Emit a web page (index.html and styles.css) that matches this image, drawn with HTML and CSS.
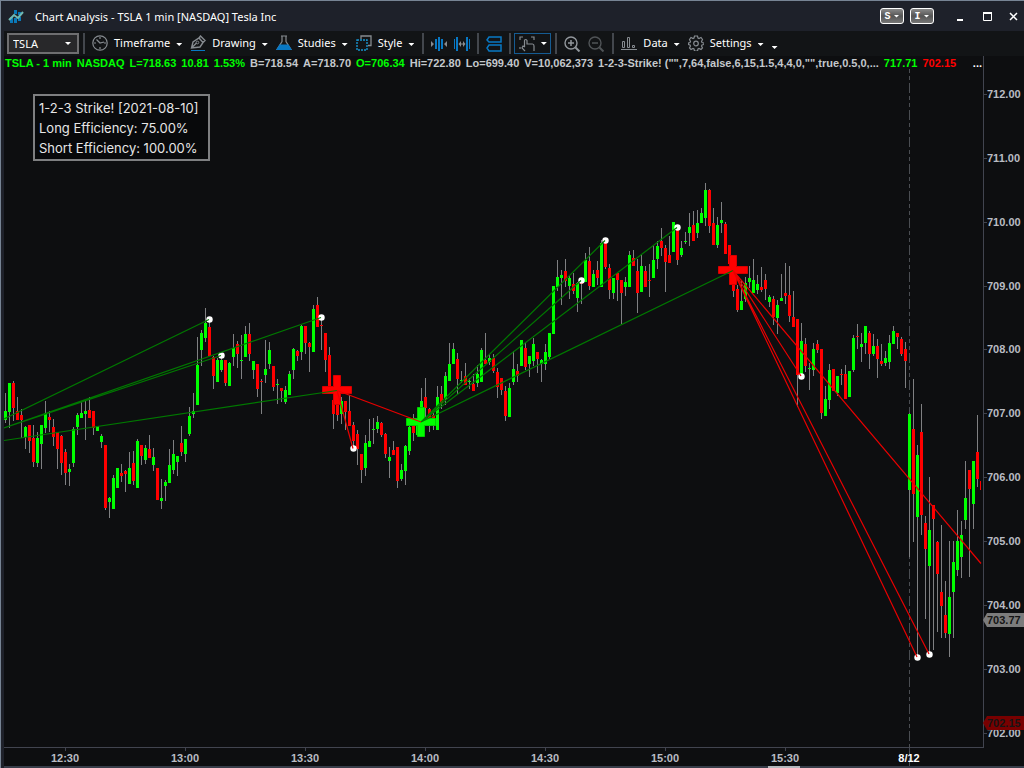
FILE: index.html
```html
<!DOCTYPE html>
<html lang="en">
<head>
<meta charset="utf-8">
<title>Chart Analysis - TSLA 1 min [NASDAQ] Tesla Inc</title>
<link rel="stylesheet" href="styles.css">
</head>
<body>
<div class="window">
  <header class="titlebar">
    <svg class="logo" width="16" height="16" viewBox="0 0 16 16"><path d="M2 9h3v6H2zM6 2h3v4H6zM6 10h3v5H6zM10 4h3v3h-3zM10 9h3v4h-3z" fill="#0a78b8"/><path d="M1 12l5-5 4 3 5-6" fill="none" stroke="#6fb9b4" stroke-width="2"/></svg>
    <h1 class="title">Chart Analysis - TSLA 1 min [NASDAQ] Tesla Inc</h1>
    <div class="links">
      <button class="link-btn" aria-label="Symbol link">S<i class="caret"></i></button>
      <button class="link-btn" aria-label="Interval link">I<i class="caret"></i></button>
    </div>
    <div class="controls">
      <button class="ctl" aria-label="Minimize"><svg width="12" height="12" viewBox="0 0 12 12"><path d="M3 9h6v2H3z" fill="#fff"/></svg></button>
      <button class="ctl" aria-label="Maximize"><svg width="12" height="12" viewBox="0 0 12 12"><path d="M2.500 2.500h8v8h-8z" fill="none" stroke="#fff"/><path d="M2 2h9v2H2z" fill="#fff"/></svg></button>
      <button class="ctl" aria-label="Close"><svg width="12" height="12" viewBox="0 0 12 12"><path d="M2 3l7 7M9 3l-7 7" stroke="#fff" stroke-width="1.5"/></svg></button>
    </div>
  </header>

  <nav class="toolbar" aria-label="Chart tools">
    <span class="symbol"><select class="symbol-select" aria-label="Symbol"><option>TSLA</option></select><i class="caret"></i></span>
    <span class="sep"></span>
    <button class="tool"><svg width="16" height="16" viewBox="0 0 16 16" fill="none" stroke="#868b90"><circle cx="8" cy="8" r="7.2" stroke-width="1.2"/><path d="M8 2v2M8 12v2M2 8h2M12 8h2M4.5 4.5L8 8l4-1" stroke-width="1.2"/></svg><span>Timeframe</span><i class="caret"></i></button>
    <button class="tool"><svg width="16" height="16" viewBox="0 0 16 16" fill="none" stroke="#868b90"><path d="M1.500 13L3 7l6-4 4 4.500L10 12zM9 3l1.500-2L15 5.500 13 7.500M1.500 13l5-5" stroke-width="1.4"/><circle cx="7.500" cy="7.500" r="1.300"/><path d="M1 15.500h14" stroke="#0878c4"/></svg><span>Drawing</span><i class="caret"></i></button>
    <button class="tool"><svg width="16" height="16" viewBox="0 0 16 16"><path d="M5 1h6M6 1v5.500L1 14.500h14L10 6.500V1" fill="none" stroke="#868b90" stroke-width="1.200"/><path d="M3.500 9.500h9L16 15H0z" fill="#0878c4"/></svg><span>Studies</span><i class="caret"></i></button>
    <button class="tool"><svg width="16" height="16" viewBox="0 0 16 16" fill="none"><path d="M5 4V1h10v9.500h-3" stroke="#868b90" stroke-width="1.300"/><path d="M1 5h10v10H1z" stroke="#1794cf" stroke-width="1.400" stroke-dasharray="2 1"/></svg><span>Style</span><i class="caret"></i></button>
    <span class="sep"></span>
    <button class="icon-btn" aria-label="Compress bars"><svg width="16" height="16" viewBox="0 0 16 16"><path d="M4 3h2v10H4zM7 1h2v14H7zM10 3h2v10h-2z" fill="#0878c4"/><path d="M0 5l3 3-3 3zM16 5l-3 3 3 3z" fill="#868b90"/></svg></button>
    <button class="icon-btn" aria-label="Expand bars"><svg width="16" height="16" viewBox="0 0 16 16"><path d="M0 3h1v10H0zM2 1h2v14H2zM12 1h2v14h-2zM15 3h1v10h-1z" fill="#0878c4"/><path d="M7 5L4.500 8 7 11zM9 5l2.500 3L9 11zM7 7.500h2v1H7z" fill="#868b90"/></svg></button>
    <span class="sep"></span>
    <button class="icon-btn" aria-label="Stack panes"><svg width="16" height="16" viewBox="0 0 16 16" fill="none" stroke="#0878c4" stroke-width="1.500"><path d="M15 1H3L1 4l2 2h12zM15 9H3l-2 3 2 3h12z"/></svg></button>
    <span class="sep"></span>
    <button class="touch" aria-label="Pointer mode"><svg width="16" height="16" viewBox="0 0 16 16" fill="none" stroke="#868b90"><path d="M1 4V1h3M12 1h3v3M1 11v2M5.500 11V4.500q0-1 1-1t1.500 1V8h5.500q1.500 0 1.500 2v5M6 15l-3-3 1-2 2 1" stroke-width="1.200"/></svg><i class="caret"></i></button>
    <span class="sep"></span>
    <button class="icon-btn" aria-label="Zoom in"><svg width="17" height="16" viewBox="0 0 17 16" fill="none" stroke="#92979c"><circle cx="7" cy="7" r="6" stroke-width="1.400"/><path d="M11.500 11.500l4 4" stroke-width="2"/><path d="M4 7h6M7 4v6" stroke-width="1.500"/></svg></button>
    <button class="icon-btn" aria-label="Zoom out"><svg width="17" height="16" viewBox="0 0 17 16" fill="none" stroke="#505457"><circle cx="7" cy="7" r="6" stroke-width="1.400"/><path d="M11.500 11.500l4 4" stroke-width="2"/><path d="M4 7h6" stroke-width="1.500"/></svg></button>
    <span class="sep"></span>
    <button class="tool"><svg width="16" height="16" viewBox="0 0 16 16" fill="none" stroke="#868b90"><path d="M1.500 6.500h2v6h-2zM6.500 2.500h2v10h-2zM11.500 10.500h2v2h-2zM0 14.500h16"/></svg><span>Data</span><i class="caret"></i></button>
    <button class="tool"><svg width="16" height="16" viewBox="0 0 16 16" fill="none" stroke="#868b90" stroke-width="1.200"><path d="M6.500 1h3l.5 2 1 .5 2-1 1.500 2-1 2 .5 1 2 .500v1.500l-2 .5-.5 1 1 2-1.500 1.500-2-1-1 .5-.5 2h-3l-.5-2-1-.5-2 1L1.500 13l1-2-.5-1-1.500-.5V8l1.500-.5.5-1-1-2 1.500-2 2 1 1-.5z"/><circle cx="8" cy="8.500" r="2.300"/></svg><span>Settings</span><i class="caret"></i></button>
    <button class="more" aria-label="More tools"><i class="caret"></i></button>
  </nav>

  <main class="chart">
    <svg id="plot" class="plot" viewBox="4 56 1020 710" preserveAspectRatio="none" role="img" aria-label="TSLA one minute candlestick chart"></svg>
    <div class="legend">
      <span class="up">TSLA - 1 min</span><span class="up">NASDAQ</span><span class="up">L=718.63</span><span class="up">10.81</span><span class="up">1.53%</span><span>B=718.54</span><span>A=718.70</span><span class="up">O=706.34</span><span>Hi=722.80</span><span>Lo=699.40</span><span>V=10,062,373</span><span>1-2-3-Strike! ("",7,64,false,6,15,1.5,4,4,0,"",true,0.5,0,...</span><span class="up">717.71</span><span class="down">702.15</span><button class="legend-more" aria-label="More values">...</button>
    </div>
    <section class="stats">
      <p>1-2-3 Strike! [2021-08-10]</p>
      <p>Long Efficiency: 75.00%</p>
      <p>Short Efficiency: 100.00%</p>
    </section>
  </main>
  <div class="scroll-strip"><span class="scroll-thumb"></span></div>
</div>
<script src="chart.js"></script>
</body>
</html>
```
FILE: styles.css
```css
* { box-sizing: border-box; }
body { margin: 0; background: #0d0e10; color: #fff; font-family: "Noto Sans", sans-serif; font-size: 11px; }
button, select { font: inherit; color: inherit; background: none; border: 0; margin: 0; padding: 0; }
svg { display: block; flex: none; }
.window { display: flex; flex-direction: column; height: 100vh; border-top: 1px solid #778494; border-left: 1px solid #778494; background: #1e212a; overflow: hidden; }
.titlebar { display: flex; align-items: center; height: 30px; flex: none; padding: 0 4px 0 7px; }
.title { margin: 0 0 0 11px; padding-top: 2px; font-size: 11px; font-weight: 400; line-height: 16px; flex: 1; white-space: nowrap; }
.links { display: flex; gap: 6px; margin-right: 20px; }
.link-btn { display: flex; align-items: center; justify-content: center; gap: 3px; width: 24px; height: 16px; border: 1px solid #fff; border-radius: 3px; background: linear-gradient(#888, #555 50%, #777); font: bold 10px "Liberation Mono", monospace; }
.controls { display: flex; gap: 15px; }
.ctl { width: 12px; height: 12px; }
.caret { display: block; flex: none; width: 6px; height: 3px; background: #fff; clip-path: polygon(0 0, 100% 0, 50% 100%); }
.toolbar { display: flex; align-items: center; height: 25px; flex: none; margin-left: 3px; padding-left: 3px; background: #121416; white-space: nowrap; }
.symbol { position: relative; width: 72px; height: 21px; margin-right: 4px; flex: none; }
.symbol-select { appearance: none; width: 100%; height: 100%; border: 2px solid #6e6e70; background: #28282a; padding: 0 4px; }
.symbol .caret { position: absolute; right: 8px; top: 9px; pointer-events: none; }
.sep { width: 2px; height: 21px; margin-right: 7px; background: #43474d; flex: none; }
.tool { display: flex; align-items: center; gap: 6px; margin-right: 8px; padding-bottom: 2px; flex: none; }
.tool .caret { margin-top: 4px; }
.icon-btn { margin-right: 7px; flex: none; }
.touch { display: flex; align-items: center; justify-content: center; gap: 6px; width: 37px; height: 21px; margin: 0 4px 0 -4px; border: 1px solid #155b92; flex: none; }
.more { margin-top: 8px; flex: none; }
.chart { position: relative; flex: 1; min-height: 0; margin-left: 3px; background: #0d0e10; overflow: hidden; }
.plot { width: 100%; height: 100%; }
.legend { position: absolute; left: 0; top: 0; width: 100%; padding: 0 42px 0 1px; display: flex; gap: 5px; font: bold 11px/14px "Liberation Sans", Arial, sans-serif; color: #c4c8cc; white-space: nowrap; }
.up { color: #0f0; }
.down { color: #f00; }
.legend-more { margin-left: auto; font-weight: bold; color: #fff; }
.stats { position: absolute; left: 29px; top: 38px; padding: 2px 10px 1px 4px; border: 2px solid #7e7f81; background: #08090b; font: 13px/20px Inter, sans-serif; color: #e6e6e6; white-space: nowrap; }
.stats p { margin: 0; }
.axis { fill: none; stroke: #41444f; stroke-width: 1; shape-rendering: crispEdges; }
.session { stroke: #4a4d52; stroke-dasharray: 10 3 4 3 4 3; stroke-dashoffset: 13; }
.label { font: bold 11px "Liberation Sans", Arial, sans-serif; fill: #b9bcc3; }
.label-time { text-anchor: middle; }
.label-day { fill: #fff; }
.crisp { shape-rendering: crispEdges; }
.wick { fill: #7f8082; }
.bull { fill: #0f0; }
.bear { fill: #f00; }
.cross { stroke-width: 1; }
.cross-bear { fill: #f00; stroke: #d80000; }
.cross-bull { fill: #0f0; stroke: #00d000; }
.trend { stroke-width: 1.2; fill: none; }
.trend-up { stroke: #007800; }
.trend-down { stroke: #e80000; }
.dot { fill: #fff; }
.tag-last { fill: #7c7c7c; }
.tag-low { fill: #780000; }
.label-tag { fill: #151515; }
.scroll-strip { display: flex; height: 2px; flex: none; margin-left: 3px; padding-right: 224px; background: #373d49; }
.scroll-thumb { width: 32px; margin-left: auto; background: #b4b8bd; }
```
FILE: chart.js
```js
// Each bar: high, body top, body bottom, low, direction (chart units), four units apart.
const BARS = `
393,411,420,423,G 383,383,412,428,G 381,383,408,421,R 397,411,420,420,R 409,415,420,438,R 426,427,437,449,G
425,425,441,453,R 425,438,462,467,R 432,438,463,467,G 425,425,444,469,G 401,413,428,433,G 411,417,420,432,R
419,427,437,446,R 432,432,449,469,R 435,436,463,475,R 449,452,473,485,R 464,469,472,486,G 427,429,463,467,G
413,415,427,435,G 401,413,418,418,G 401,411,414,440,G 397,410,418,418,R 411,411,428,435,R 426,426,431,431,G
434,436,442,448,G 445,445,508,510,R 497,498,502,518,G 475,478,509,509,G 468,468,488,488,G 464,473,476,482,R
470,471,474,492,R 452,468,484,484,G 451,463,481,485,R 439,441,488,488,G 445,445,456,465,R 445,448,460,464,G
435,449,458,458,R 448,457,465,471,G 468,468,500,500,R 479,498,501,509,G 480,482,486,501,G 449,465,483,483,G
440,454,470,474,G 456,456,462,476,G 426,443,452,456,R 439,439,454,462,G 407,416,434,436,G 393,411,414,418,G
337,365,405,405,G 330,333,350,366,G 308,323,338,342,G 318,327,356,356,R 356,357,376,389,R 358,360,382,382,G
356,360,370,372,G 360,360,383,386,R 362,363,386,386,G 334,348,357,366,G 341,344,354,368,R 335,360,361,379,G
326,334,357,357,G 323,334,354,361,R 361,361,370,379,G 364,364,389,397,R 379,381,382,414,R 340,369,375,383,G
342,350,364,369,G 366,366,387,391,R 379,384,385,404,G 388,388,391,402,R 386,390,402,404,G 371,374,395,395,G
348,349,370,379,G 350,351,356,361,R 325,326,352,360,G 326,326,343,354,R 342,343,347,372,R 305,309,352,352,G
297,305,327,327,R 320,325,326,350,R 333,333,360,372,R 347,355,388,390,R 390,400,414,429,R 393,403,415,421,R
397,401,414,424,G 401,401,412,430,R 395,411,426,426,R 422,425,441,447,R 430,434,449,465,R 454,454,470,483,R
435,443,468,476,G 419,441,447,447,G 418,429,430,444,G 416,422,429,433,G 422,423,435,437,R 433,434,454,458,R
447,457,461,478,G 441,450,455,455,R 447,447,481,488,R 464,470,479,481,G 445,446,471,485,G 426,427,451,455,G
414,423,433,441,R 417,421,435,435,G 388,401,420,430,G 378,397,408,418,R 408,409,419,432,R 409,415,425,430,R
386,397,430,430,G 386,394,403,409,R 372,376,399,405,G 343,364,381,381,G 343,349,364,364,G 353,359,379,394,R
371,380,381,383,G 363,376,385,385,R 378,381,382,389,G 374,384,391,391,R 365,374,383,387,G 348,350,382,382,G
333,360,364,364,R 354,358,362,365,G 354,358,371,373,R 368,372,387,398,R 378,378,390,395,R 386,391,416,421,R
383,388,417,417,G 351,369,382,385,G 364,371,376,382,R 340,340,366,366,G 342,348,367,370,R 356,356,364,377,G
338,344,361,366,G 352,352,359,373,R 359,360,364,382,G 344,352,364,370,G 333,333,357,359,G 286,286,334,334,G
260,277,287,291,G 270,275,278,305,G 259,271,281,287,R 276,278,286,299,G 273,284,291,294,R 282,283,298,312,G
280,281,284,304,R 253,260,282,282,G 247,261,286,290,R 270,274,287,287,G 261,270,278,285,R 240,243,287,287,G
240,242,267,269,R 264,268,290,299,R 278,278,293,299,G 273,273,280,301,R 280,280,293,324,R 277,282,287,296,G
251,255,287,287,G 250,258,266,266,R 259,271,293,313,R 255,266,292,292,G 266,271,287,287,R 264,280,281,297,R
245,260,278,278,G 241,246,259,269,G 228,241,248,256,R 245,248,262,292,R 236,255,263,263,R 222,222,252,252,G
227,229,260,265,R 241,248,255,257,G 232,241,242,244,G 213,227,233,246,G 211,225,241,241,R 210,223,233,238,G
208,213,223,223,G 183,190,218,226,G 189,190,226,233,R 208,223,245,245,R 217,225,245,248,G 202,220,223,233,G
222,224,254,254,R 245,245,264,270,R 265,266,291,297,R 285,289,310,312,R 280,301,310,310,G 277,283,299,302,G
266,278,282,288,G 259,280,293,293,G 275,284,290,294,G 267,287,290,292,R 274,280,289,300,R 295,297,302,307,G
296,299,317,325,R 300,305,318,334,G 274,298,301,301,G 263,293,296,304,R 266,295,316,322,R 291,317,327,327,R
319,319,375,407,R 323,341,375,375,G 338,344,366,372,R 363,368,369,390,G 343,349,370,376,G 340,344,350,353,R
349,349,413,419,R 386,399,416,416,G 364,370,400,409,G 369,369,391,391,R 376,376,393,396,G 369,374,375,385,R
365,374,399,399,R 371,371,397,397,G 335,338,370,372,G 324,336,337,349,R 333,344,347,362,G 326,326,343,354,G
331,333,354,369,R 334,346,354,356,G 339,346,359,378,R 344,361,364,366,R 351,358,363,366,G 335,343,362,369,G
326,331,344,344,G 333,333,337,349,R 337,339,354,356,R 342,349,361,388,R 413,414,490,557,G 379,429,494,542,R
445,455,517,655,G 404,432,515,535,R 516,523,549,619,R 477,530,566,653,G 505,505,519,650,R 541,542,574,632,R
525,592,606,638,R 581,615,633,638,R 541,597,634,657,G 541,562,592,638,G 510,541,570,576,G 521,535,557,578,G
461,498,520,529,G 470,470,489,577,R 461,461,504,529,G 415,452,479,487,R 481,481,490,490,R`;

const RIGHT = 981;
let wicks = '', bulls = '', bears = '';
BARS.trim().split(/\s+/).forEach((bar, i) => {
  const [high, top, bottom, low, dir] = bar.split(',');
  const x = 5 + i * 4;
  if (x < RIGHT) wicks += `M${x} ${high}h1V${low}h-1z`;
  const body = `M${x - 1} ${top}H${Math.min(x + 2, RIGHT)}V${bottom}H${x - 1}z`;
  if (dir === 'G') bulls += body; else bears += body;
});

const path = (cls, d) => `<path class="${cls}" d="${d}"/>`;
const text = (cls, x, y, s) => `<text class="label ${cls}" x="${x}" y="${y}">${s}</text>`;

let out = path('axis', 'M983.5 56V747.5M4 747.5H984') + path('axis session', 'M909.5 69V766');
out += path('crisp wick', wicks) + path('crisp bull', bulls) + path('crisp bear', bears);

const cross = (cls, x, y) => path('cross ' + cls,
  `M${x - 4} ${y - 15}h7v11h11v7h-11v11h-7v-11h-11v-7h11z`);
out += cross('cross-bear', 337.5, 390.5) + cross('cross-bull', 421.5, 422.5) + cross('cross-bear', 733.5, 270.5);

[[209, 319], [221, 355], [321, 317], [353, 448], [581, 280], [605, 240], [677, 227], [801, 376], [917, 657], [929, 654]]
  .forEach(([x, y]) => { out += `<circle class="dot" cx="${x + 0.5}" cy="${y + 0.5}" r="3.2"/>`; });

out += path('trend trend-up', 'M4 419L209 319.5M4 428L321 317.5M4 428L221 355.5M4 440.5L337 390.5' +
  'M421 422L605 240.500M421 422L581 280.500M421 422L677 227.500M421 422L733 270.500');
out += path('trend trend-down', 'M337 390.500L421 422M337 390.500L353 448.500' +
  'M733 270.500L801 376M733 270.500L917 657M733 270.500L929 654M733 270.500L981 563.500');

for (let i = 0; i <= 10; i++) {
  const y = Math.round(93.8 + i * 63.9);
  out += path('axis', `M984 ${y + 0.5}h3`) + text('', 987, y + 4, (712 - i) + '.00');
}
['12:30', '13:00', '13:30', '14:00', '14:30', '15:00', '15:30', '8/12'].forEach((t, i) => {
  const x = i === 7 ? 909 : 65 + i * 120;
  out += path('axis', `M${x + 0.5} 748v3`) + text(i === 7 ? 'label-time label-day' : 'label-time', x, 762, t);
});
const tag = (cls, y, s) => path(cls, `M983 ${y}l4-7h37v14h-37z`) + text('label-tag', 987, y + 4, s);
out += tag('tag-last', 620, '703.77') + tag('tag-low', 723, '702.15');

document.getElementById('plot').innerHTML = out;
```
